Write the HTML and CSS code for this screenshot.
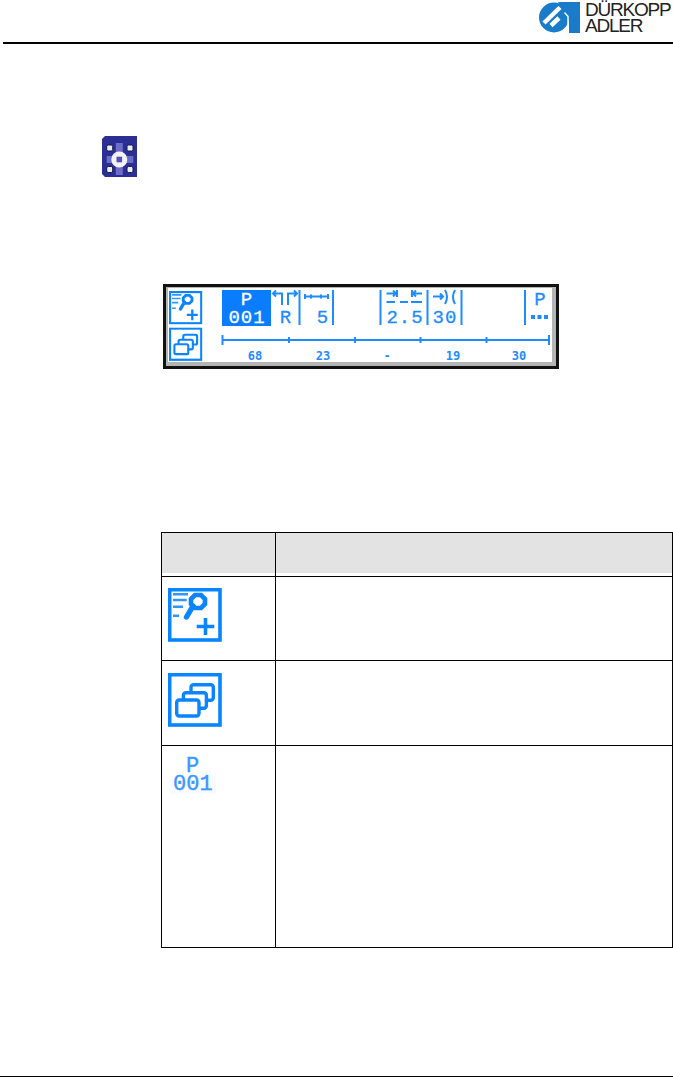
FILE: index.html
```html
<!DOCTYPE html>
<html lang="en">

<head>
    <meta charset="UTF-8">
    <meta name="viewport" content="width=device-width, initial-scale=1.0">
    <title>Operating Instructions - Program Menu</title>
    <link rel="stylesheet" href="styles.css">
</head>

<body>

    <!-- Icon symbols used in the display and in the table -->
    <svg class="defs" width="0" height="0" aria-hidden="true">
        <symbol id="icon-program-add" viewBox="0 0 54 54">
            <rect x="1.7" y="1.7" width="50.3" height="50.3" fill="#fff" stroke="#0a84ff" stroke-width="3.6"/>
            <path d="M5 6.300H20M5 12H18.700M5 18.700H15M5 27.700H11" fill="none" stroke="#2f97ff" stroke-width="2.6"/>
            <path d="M27 7H33L37 11V16L33 20H27L23 16V11Z" fill="none" stroke="#0a84ff" stroke-width="4.600"/>
            <path d="M25 18L18.500 29" stroke="#0a84ff" stroke-width="5.400" stroke-linecap="round"/>
            <path d="M28.700 38.500H46.300M37.500 30V47" fill="none" stroke="#0a84ff" stroke-width="3.600"/>
        </symbol>
        <symbol id="icon-layers" viewBox="0 0 54 54">
            <rect x="1.7" y="1.7" width="50.300" height="50.300" fill="#fff" stroke="#0a84ff" stroke-width="3.600"/>
            <rect x="23" y="11.700" width="22.300" height="15.600" rx="2.500" fill="#fff" stroke="#0a84ff" stroke-width="3.400"/>
            <rect x="15.400" y="19.700" width="23" height="15.600" rx="2.500" fill="#fff" stroke="#0a84ff" stroke-width="3.400"/>
            <rect x="8.700" y="27" width="22.300" height="16" rx="2.500" fill="#fff" stroke="#0a84ff" stroke-width="3.400"/>
        </symbol>
    </svg>

    <!-- Header -->
    <div class="header">
        <svg class="logo" viewBox="0 0 41 31" width="41" height="31">
            <circle cx="15" cy="15.500" r="15" fill="#1a7cc9"/>
            <path d="M19 0H41V31H30V14Z" fill="#1a7cc9"/>
            <path d="M5 21L21 5.500M12 23.500L20 16" fill="none" stroke="#fff" stroke-width="4.500"/>
            <path d="M29 31V14.500L25.500 10.500" fill="none" stroke="#fff" stroke-width="1.400"/>
        </svg>
        <div class="brand">
            <div>DÜRKOPP</div>
            <div>ADLER</div>
        </div>
    </div>

    <!-- Menu button -->
    <svg class="menu-icon" viewBox="0 0 35 41" width="35" height="41">
        <path d="M3 0H35V41H3L0 38V3Z" fill="#2b2f93"/>
        <path d="M17.300 7V39M4.700 23.500H31.300" stroke="#6d6cc8" stroke-width="7"/>
        <rect x="4.700" y="9" width="6" height="6" rx="1.500" fill="#ececec" stroke="#15174f" stroke-width="1"/>
        <rect x="25" y="9" width="6" height="6" rx="1.500" fill="#ececec" stroke="#15174f" stroke-width="1"/>
        <rect x="4.700" y="30.500" width="6" height="6" rx="1.500" fill="#ececec" stroke="#15174f" stroke-width="1"/>
        <rect x="25" y="30.500" width="6" height="6" rx="1.500" fill="#ececec" stroke="#15174f" stroke-width="1"/>
        <circle cx="17.300" cy="23.500" r="6" fill="#f2f2f8" stroke="#f2f2f8" stroke-width="4"/>
        <rect x="14.500" y="20.700" width="5.600" height="5.600" fill="#5450b8"/>
    </svg>

    <!-- Display of the machine -->
    <div class="lcd">
        <svg class="lcd-screen" viewBox="0 0 384 74" width="384" height="74">
            <use href="#icon-program-add" x="1" y="3" width="33.500" height="33.500"/>
            <use href="#icon-layers" x="1" y="39.500" width="33.500" height="33.500"/>

            <rect x="54" y="2" width="49" height="36" fill="#0a7dff"/>
            <text class="lcd-big inverse" x="79" y="17" text-anchor="middle">P</text>
            <text class="lcd-big inverse" x="79" y="35" text-anchor="middle">001</text>

            <g class="lcd-line">
                <path d="M105 5.500H114V17M129 5.500H120V17M108 2.500L105 5.500L108 8.500M126 2.500L129 5.500L126 8.500"/>
                <path d="M131.500 2V37M165 2V37M212.500 2V37M259.500 2V37M293.500 2V37M357 2V37"/>
                <path d="M137 6V11M137 8.500H160M160 6V11M143 6.500V10.500M153 6.500V10.500"/>
                <path d="M218.500 5.500H228M225 2.500L228 5.500L225 8.500M229 2V9"/>
                <path d="M254 5.500H245M248 2.500L245 5.500L248 8.500M244 2V9"/>
                <path d="M218.500 14H227M232 14H240M243 14H254"/>
                <path d="M265 8.500H275M272 5.500L275 8.500L272 11.500"/>
                <path d="M277 2Q281 9 277 16M287 2Q283 9 287 16"/>
            </g>
            <text class="lcd-big" x="118" y="35" text-anchor="middle">R</text>
            <text class="lcd-big" x="155" y="35" text-anchor="middle">5</text>
            <text class="lcd-big" x="237" y="35" text-anchor="middle">2.5</text>
            <text class="lcd-big" x="277" y="35" text-anchor="middle">30</text>
            <text class="lcd-big" x="372.500" y="17" text-anchor="middle">P</text>
            <path class="lcd-dots" d="M363 27h4v4h-4zM369.500 27h4v4h-4zM376 27h4v4h-4z"/>

            <path class="lcd-line" d="M54.500 47V57M54.500 52H381M121 49V55M187 49V55M252.500 49V55M318.500 49V55M381 47V57"/>
            <text class="lcd-small" x="87" y="72" text-anchor="middle">68</text>
            <text class="lcd-small" x="155" y="72" text-anchor="middle">23</text>
            <text class="lcd-small" x="219" y="72" text-anchor="middle">-</text>
            <text class="lcd-small" x="285" y="72" text-anchor="middle">19</text>
            <text class="lcd-small" x="351" y="72" text-anchor="middle">30</text>
        </svg>
    </div>

    <!-- Table of symbols -->
    <table class="symbols">
        <tr class="row-head">
            <th class="col-symbol"><div class="head-fill"></div></th>
            <th><div class="head-fill"></div></th>
        </tr>
        <tr class="row-first">
            <td class="cell-symbol"><svg class="table-icon icon-first" width="54" height="54"><use href="#icon-program-add"/></svg></td>
            <td></td>
        </tr>
        <tr class="row-second">
            <td class="cell-symbol"><svg class="table-icon" width="54" height="54"><use href="#icon-layers"/></svg></td>
            <td></td>
        </tr>
        <tr class="row-tall">
            <td class="cell-program">
                <div class="program-name">P</div>
                <div class="program-no">001</div>
            </td>
            <td></td>
        </tr>
    </table>

    <div class="footer"></div>

</body>
</html>
```

FILE: styles.css
```css
body {
    margin: 0;
    width: 673px;
    height: 1077px;
    background-color: #fff;
    font-family: 'Liberation Sans', Arial, sans-serif;
    display: flex;
    flex-direction: column;
    overflow: hidden;
}

.defs {
    display: none;
}

/* Header */
.header {
    height: 42px;
    margin-left: 3px;
    padding-right: 3px;
    border-bottom: 2px solid #000;
    display: flex;
    justify-content: flex-end;
    align-items: flex-start;
    gap: 5px;
}

.logo {
    margin-top: 2px;
    flex: none;
}

.brand {
    font-size: 19px;
    line-height: 16px;
    letter-spacing: -1.2px;
    color: #222;
    padding-top: 2px;
    width: 85px;
}

/* Menu button */
.menu-icon {
    display: block;
    margin: 92px 0 0 102px;
    flex: none;
}

/* Display */
.lcd {
    box-sizing: border-box;
    width: 396px;
    height: 85px;
    margin: 107px 0 0 163px;
    padding: 1px 4px 4px 2px;
    border: 3px solid #111;
    background-color: #b4b4b4;
    flex: none;
}

.lcd-screen {
    display: block;
    background-color: #fff;
}

.lcd-big {
    font-family: 'Liberation Mono', monospace;
    font-size: 19px;
    letter-spacing: 1px;
    fill: #1e8cff;
    stroke: #1e8cff;
    stroke-width: 0.3;
}

.lcd-big.inverse {
    fill: #fff;
    stroke: #fff;
}

.lcd-small {
    font-family: 'DejaVu Sans Mono', monospace;
    font-size: 12px;
    font-weight: bold;
    fill: #1e8cff;
}

.lcd-line {
    fill: none;
    stroke: #1e8cff;
    stroke-width: 2;
}

.lcd-dots {
    fill: #1e8cff;
}

/* Table */
.symbols {
    width: 512px;
    margin: 163px 0 0 161px;
    border-collapse: collapse;
    table-layout: fixed;
    flex: none;
}

.symbols th,
.symbols td {
    border: 1px solid #000;
    padding: 0;
}

.col-symbol {
    width: 113px;
}

.row-head {
    height: 44px;
}

.symbols th {
    vertical-align: top;
}

.head-fill {
    height: 40px;
    background-color: #e3e3e3;
}

.row-first {
    height: 84px;
}

.row-second {
    height: 85px;
}

.row-tall {
    height: 202px;
}

.cell-symbol {
    vertical-align: top;
}

.table-icon {
    display: block;
    margin: 12px 0 0 6px;
}

.icon-first {
    margin-top: 11px;
}

.symbols .cell-program {
    vertical-align: top;
    padding: 12px 0 0 8px;
    font-family: 'Liberation Mono', monospace;
    font-size: 22px;
    color: #3c96ff;
    -webkit-text-stroke: 0.4px #3c96ff;
}

.program-name {
    line-height: 18px;
    padding-left: 16px;
}

.program-no {
    width: fit-content;
    line-height: 18px;
    padding: 0 3px;
    background-color: #f9fcff;
}

/* Footer */
.footer {
    margin-top: auto;
    border-bottom: 1px solid #000;
}
```
